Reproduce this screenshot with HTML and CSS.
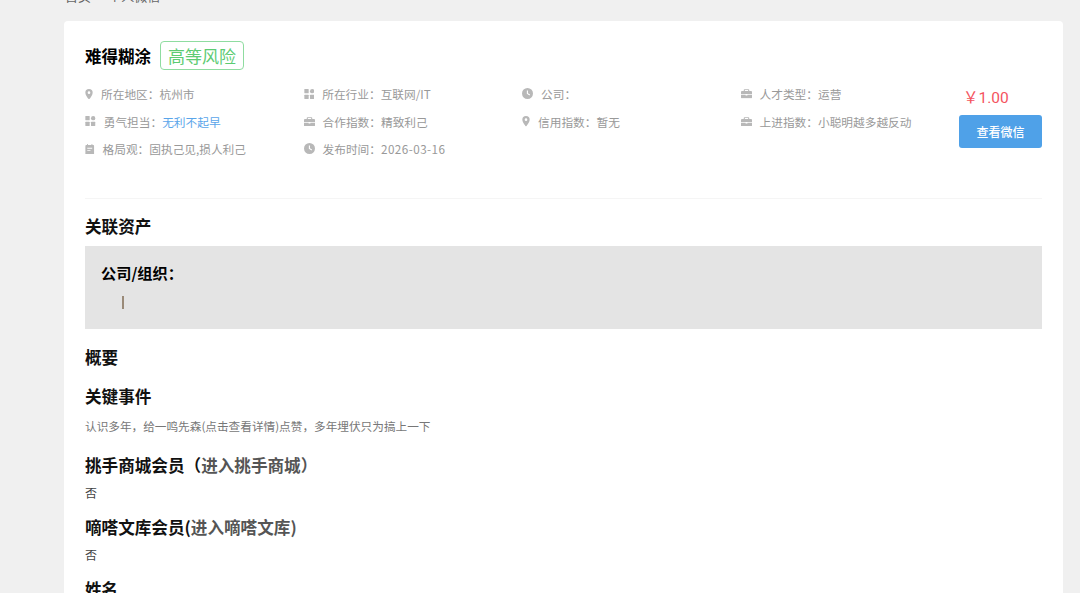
FILE: index.html
```html
<!DOCTYPE html>
<html lang="zh">
<head>
<meta charset="utf-8">
<title>个人微信</title>
<link rel="stylesheet" href="styles.css">
</head>
<body>
<svg class="sprite" width="0" height="0">
  <symbol id="pin" viewBox="1.8 0 8.4 12"><path fill-rule="evenodd" d="M6 0a4.2 4.2 0 0 0-4.2 4.2C1.8 7.2 6 12 6 12s4.2-4.8 4.2-7.8A4.2 4.2 0 0 0 6 0zm0 5.7a1.5 1.5 0 1 1 0-3 1.5 1.5 0 0 1 0 3z"/></symbol>
  <symbol id="grid" viewBox="0 0 12 12"><rect x="0" y="0" width="5.2" height="5.2" rx="0.7"/><circle cx="9.4" cy="2.6" r="2.6"/><rect x="0" y="6.8" width="5.2" height="5.2" rx="0.7"/><rect x="6.8" y="6.8" width="5.2" height="5.2" rx="0.7"/></symbol>
  <symbol id="case" viewBox="0 0 12 10"><path d="M4 0h4a1 1 0 0 1 1 1v1h2a1 1 0 0 1 1 1v2.4H0V3a1 1 0 0 1 1-1h2V1a1 1 0 0 1 1-1zM4.2 1v1h3.6V1zM0 6.2h5V7h2v-.8h5V9a1 1 0 0 1-1 1H1a1 1 0 0 1-1-1z"/></symbol>
  <symbol id="clock" viewBox="0 0 12 12"><path fill-rule="evenodd" d="M6 0a6 6 0 1 0 0 12A6 6 0 0 0 6 0zm-.7 2.6h1.2v3.1l2.3 1.4-.6 1L5.3 6.4z"/></symbol>
  <symbol id="note" viewBox="1 0 10 12"><path fill-rule="evenodd" d="M3 0h1v1.2h4V0h1v1.2h1a1 1 0 0 1 1 1V11a1 1 0 0 1-1 1H2a1 1 0 0 1-1-1V2.2a1 1 0 0 1 1-1h1zM3.2 4.4v1h5.6v-1zm0 2.4v1h3.6v-1z"/></symbol>
</svg>
<div class="page">
  <div class="crumb"><span>首页</span><span class="sep">&gt;</span><span>个人微信</span></div>
  <main class="card">
    <section class="head">
      <div class="title-row">
        <h1 class="name">难得糊涂</h1>
        <span class="risk">高等风险</span>
      </div>
      <div class="info">
        <div class="meta">
          <div class="item"><svg class="ico i-pin"><use href="#pin"/></svg><span class="lbl">所在地区：杭州市</span></div>
          <div class="item"><svg class="ico i-grid"><use href="#grid"/></svg><span class="lbl">所在行业：互联网/IT</span></div>
          <div class="item"><svg class="ico i-clock"><use href="#clock"/></svg><span class="lbl">公司：</span></div>
          <div class="item"><svg class="ico i-case"><use href="#case"/></svg><span class="lbl">人才类型：运营</span></div>
          <div class="item"><svg class="ico i-grid"><use href="#grid"/></svg><span class="lbl">勇气担当：<span class="blue">无利不起早</span></span></div>
          <div class="item"><svg class="ico i-case"><use href="#case"/></svg><span class="lbl">合作指数：精致利己</span></div>
          <div class="item"><svg class="ico i-pin"><use href="#pin"/></svg><span class="lbl">信用指数：暂无</span></div>
          <div class="item"><svg class="ico i-case"><use href="#case"/></svg><span class="lbl">上进指数：小聪明越多越反动</span></div>
          <div class="item"><svg class="ico i-note"><use href="#note"/></svg><span class="lbl">格局观：固执己见,损人利己</span></div>
          <div class="item"><svg class="ico i-clock"><use href="#clock"/></svg><span class="lbl">发布时间：<span class="date">2026-03-16</span></span></div>
        </div>
        <div class="buy">
          <div class="price">￥1.00</div>
          <button class="btn">查看微信</button>
        </div>
      </div>
    </section>
    <section class="assets">
      <h2 class="h">关联资产</h2>
      <div class="org">
        <div class="org-t">公司/组织：</div>
        <div class="org-v"><span class="bar"></span></div>
      </div>
    </section>
    <h2 class="h summary">概要</h2>
    <h2 class="h key">关键事件</h2>
    <p class="desc">认识多年，给一鸣先森(点击查看详情)点赞，多年埋伏只为搞上一下</p>
    <h2 class="h sub">挑手商城会员（<span class="lnk">进入挑手商城）</span></h2>
    <p class="val">否</p>
    <h2 class="h sub2">嘀嗒文库会员(<span class="lnk">进入嘀嗒文库)</span></h2>
    <p class="val">否</p>
    <h2 class="h sub2">姓名</h2>
  </main>
</div>
</body>
</html>
```
FILE: styles.css
```css
* { box-sizing: border-box; }
html, body { margin: 0; height: 100%; overflow: hidden; }
body {
  background: #f0f0f0;
  font-family: "Noto Sans CJK SC", "Liberation Sans", sans-serif;
  color: #000;
}
.sprite { display: block; height: 0; }
.page { padding-left: 64px; width: 1063px; }
.crumb {
  height: 21px;
  margin-top: -13px;
  margin-bottom: 13px;
  padding-left: 1px;
  font-size: 13px;
  line-height: 18px;
  color: #666;
}
.sep { margin: 0 5px; }
.card {
  background: #fff;
  border-radius: 4px;
  padding: 20px 21px 0;
  height: 700px;
}
.head { border-bottom: 1px solid #f5f5f5; height: 158px; }
.title-row { display: flex; align-items: center; height: 29px; gap: 9px; }
.name { margin: 0; padding-top: 2px; font-size: 16.5px; line-height: 27px; font-weight: 700; }
.risk {
  border: 1px solid #8fdca0;
  border-radius: 4px;
  color: #5ccb72;
  font-size: 17px;
  line-height: 27px;
  padding: 0 7px;
}
.info { display: flex; margin-top: 10px; }
.meta {
  flex: 1;
  display: grid;
  grid-template-columns: repeat(4, 218.5px);
  grid-auto-rows: 27.5px;
  align-content: start;
}
.item { display: flex; align-items: center; height: 27.5px; font-size: 11.7px; color: #999; }
.ico { fill: #b8b8b8; flex: none; }
.i-pin { width: 8px; height: 10.5px; }
.i-grid { width: 10.7px; height: 10px; }
.i-case { width: 11px; height: 9.5px; }
.i-clock { width: 11px; height: 11px; }
.i-note { width: 9.5px; height: 10.5px; }
.lbl { white-space: nowrap; margin-left: 8px; }
.blue { color: #5aa5ea; }
.date { letter-spacing: 0.45px; }
.buy { width: 83px; flex: none; display: flex; flex-direction: column; }
.price { color: #f4535e; font-size: 15.5px; line-height: 24px; height: 24px; padding-left: 4px; margin-top: 6px; font-family: "Roboto", "Noto Sans CJK SC", sans-serif; }
.btn {
  display: block;
  width: 83px;
  height: 33px;
  margin-top: 5px;
  border: 0;
  border-radius: 3px;
  background: #4fa1e8;
  color: #fff;
  font: 500 12px "Noto Sans CJK SC", sans-serif;
}
.h { margin: 0; font-size: 16.6px; font-weight: 700; line-height: 24px; color: #111; }
.assets { padding-top: 15px; }
.org { background: #e4e4e4; height: 83px; margin-top: 8px; padding: 15px 16px 0; }
.org-t { font-size: 15.2px; font-weight: 700; line-height: 22px; }
.org-v { padding: 13px 0 0 21px; height: 24px; }
.bar { display: block; width: 1.5px; height: 13px; background: #9a8a78; }
.summary { margin-top: 16px; }
.key { margin-top: 15px; }
.desc { margin: 8px 0 0; font-size: 11.65px; line-height: 20px; color: #777; }
.sub { margin-top: 17px; }
.sub2 { margin-top: 13px; }
.lnk { color: #555; }
.val { margin: 7px 0 0; font-size: 12px; line-height: 18px; color: #444; }
```
